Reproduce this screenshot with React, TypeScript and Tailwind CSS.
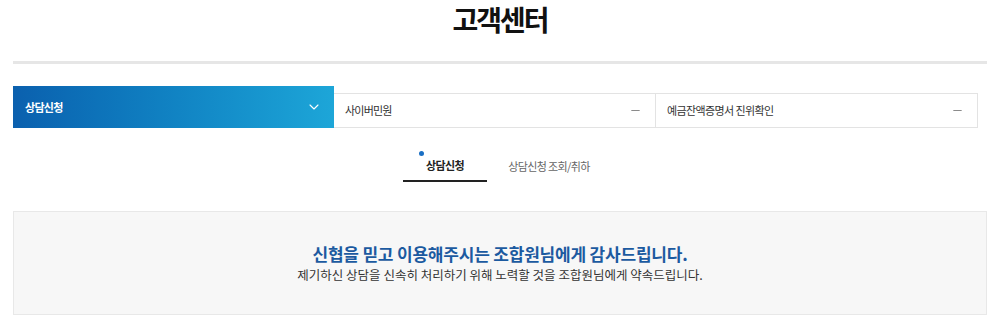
import { ChevronDown, Minus } from "lucide-react";

const font = { fontFamily: '"Noto Sans CJK KR", "Noto Sans", sans-serif' };

export default function App() {
  return (
    <div className="w-[1000px] h-[324px] bg-white overflow-hidden px-[13px]" style={font}>
      {/* Title */}
      <h1 className="pt-[2px] text-center text-[28px] leading-[34px] font-bold tracking-[-2px] text-[#111]">
        고객센터
      </h1>
      <div className="mt-[25px] h-[3px] bg-[#e6e6e6]" />

      {/* Top tabs */}
      <div className="mt-[22px] flex items-end w-[965px] h-[42px]">
        <div className="w-[321px] h-[42px] flex items-center justify-between pl-[12px] pr-[12px] bg-gradient-to-r from-[#0b60ae] to-[#1da6d8] text-white">
          <span className="text-[11px] font-bold tracking-[-0.7px]">상담신청</span>
          <ChevronDown className="w-[16px] h-[16px]" strokeWidth={1.6} />
        </div>
        <div className="w-[322px] h-[35px] flex items-center justify-between pl-[11px] pr-[13px] border border-l-0 border-[#e3e3e3] text-[#333]">
          <span className="text-[11px] tracking-[-0.8px]">사이버민원</span>
          <Minus className="w-[13px] h-[13px] text-[#666]" strokeWidth={1.4} />
        </div>
        <div className="w-[322px] h-[35px] flex items-center justify-between pl-[11px] pr-[13px] border border-l-0 border-[#e3e3e3] text-[#333]">
          <span className="text-[11px] tracking-[-0.6px]">예금잔액증명서 진위확인</span>
          <Minus className="w-[13px] h-[13px] text-[#666]" strokeWidth={1.4} />
        </div>
      </div>

      {/* Sub tabs */}
      <div className="mt-[22px] flex justify-center gap-[20px] pr-[6px]">
        <div className="relative w-[84px] h-[32px] flex items-center justify-center border-b-2 border-[#222] text-[11px] font-bold tracking-[-0.6px] text-[#222]">
          <span className="absolute left-[16px] top-[1px] w-[5px] h-[5px] rounded-full bg-[#1a6fc4]" />
          상담신청
        </div>
        <div className="w-[84px] h-[32px] flex items-center justify-center text-[11px] tracking-[-0.6px] text-[#666]">
          상담신청 조회/취하
        </div>
      </div>

      {/* Notice box */}
      <div className="mt-[29px] h-[104px] bg-[#f7f7f7] border border-[#e8e8e8] flex flex-col items-center pt-[30px]">
        <p className="text-[17px] leading-[24px] font-bold tracking-[-0.2px] text-[#1c5aa0]">
          신협을 믿고 이용해주시는 조합원님에게 감사드립니다.
        </p>
        <p className="text-[12.5px] leading-[18px] text-[#333]">
          제기하신 상담을 신속히 처리하기 위해 노력할 것을 조합원님에게 약속드립니다.
        </p>
      </div>
    </div>
  );
}
